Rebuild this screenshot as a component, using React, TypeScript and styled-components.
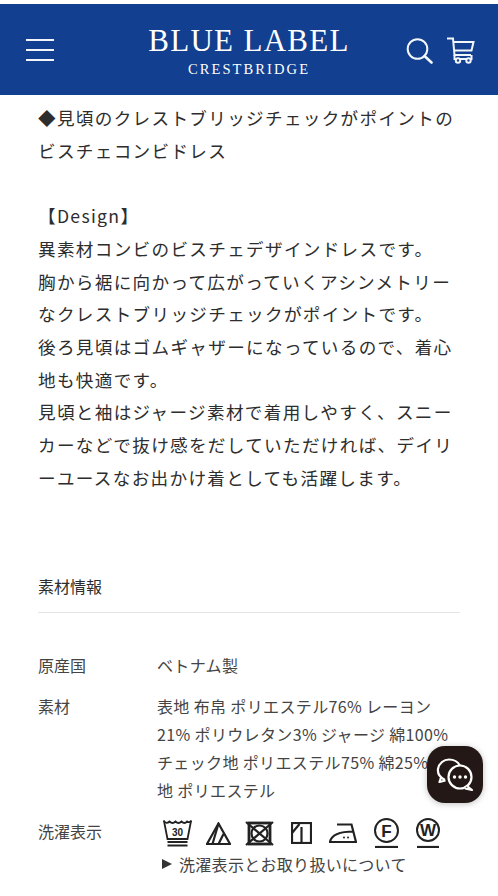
import * as React from 'react';
import styled, {createGlobalStyle} from 'styled-components';

const GlobalStyle = createGlobalStyle`
  html, body {
    margin: 0;
    padding: 0;
    height: 100%;
    overflow: hidden;
    background: #fff;
  }
  body {
    font-family: "Noto Sans CJK JP", "Noto Sans", sans-serif;
    color: #333;
  }
`;

const Page = styled.div`
  width: 498px;
  height: 896px;
  padding-top: 4px;
  box-sizing: border-box;
  overflow: hidden;
`;

const Header = styled.header`
  height: 91px;
  background: #123f8f;
  display: grid;
  grid-template-columns: 1fr auto 1fr;
  align-items: center;
  padding: 0 23px;
  color: #fff;
`;

const MenuButton = styled.div`
  width: 28px;
  margin-left: 3px;
  display: flex;
  flex-direction: column;
  gap: 8px;

  & span {
    display: block;
    height: 2px;
    background: #f2f5fa;
  }
`;

const Logo = styled.div`
  display: flex;
  flex-direction: column;
  align-items: center;
  font-family: "Liberation Serif", serif;
  padding-top: 3px;
`;

const LogoMain = styled.div`
  font-size: 31px;
  line-height: 32px;
  letter-spacing: 1.3px;
  white-space: nowrap;
`;

const LogoSub = styled.div`
  font-size: 14.5px;
  line-height: 16px;
  letter-spacing: 2.1px;
  margin-top: 4px;
`;

const HeaderIcons = styled.div`
  display: flex;
  justify-content: flex-end;
  align-items: center;
  gap: 13px;
  padding-top: 2px;
`;

const Description = styled.div`
  padding: 7px 38px 0;
  font-size: 17.6px;
  line-height: 32.7px;
  letter-spacing: 1.32px;
  color: #2d2d2d;
  white-space: nowrap;
`;

const Blank = styled.div`
  height: 32.7px;
`;

const SectionTitle = styled.h2`
  margin: 81px 38px 0;
  padding-bottom: 15px;
  font-size: 16px;
  line-height: 22px;
  font-weight: 400;
  color: #2d2d2d;
  border-bottom: 1px solid #e4e4e4;
`;

const SpecList = styled.div`
  margin: 38px 38px 0;
  display: flex;
  flex-direction: column;
  gap: 13px;
`;

const SpecRow = styled.div`
  display: grid;
  grid-template-columns: 119px 1fr;
  font-size: 16px;
  line-height: 28px;
  color: #444;
`;

const SpecValue = styled.div`
  white-space: nowrap;
  letter-spacing: 0.36px;
`;

const CareIcons = styled.div<{$gap: number}>`
  display: flex;
  align-items: center;
  gap: ${(p) => p.$gap}px;
`;

const CareRow = styled(CareIcons)`
  margin-left: 6px;
  height: 32px;
`;

const CareLink = styled.div`
  display: flex;
  align-items: center;
  gap: 7px;
  margin: 1px 0 0 5px;
  white-space: nowrap;
  letter-spacing: 0.3px;

  &::before {
    content: "";
    border-left: 10px solid #333;
    border-top: 5px solid transparent;
    border-bottom: 5px solid transparent;
  }
`;

const ChatButton = styled.div`
  position: fixed;
  left: 427px;
  top: 746px;
  width: 56px;
  height: 57px;
  border-radius: 18px;
  background: #231815;
  display: flex;
  align-items: center;
  justify-content: center;
  box-shadow: 0 1px 6px rgba(0, 0, 0, 0.25);
`;

const Search = () => (
  <svg width="27" height="26" viewBox="0 0 27 26" fill="none" stroke="#f2f5fa" strokeWidth="2" strokeLinecap="round">
    <circle cx="11.5" cy="11" r="9.8" />
    <path d="M18.5 18 L25.5 24.5" strokeWidth="2.6" />
  </svg>
);

const Cart = () => (
  <svg width="29" height="27" viewBox="0 0 29 27" fill="none" stroke="#f2f5fa" strokeWidth="2">
    <path d="M1 1.5 H7 L8.5 18 H25" />
    <path d="M7.2 5 H27.5 L25.5 13.5 H8" />
    <path d="M8.5 18 V22 H25.5 V18" />
    <circle cx="12" cy="23.5" r="2.2" fill="#123f8f" />
    <circle cx="22.5" cy="23.5" r="2.2" fill="#123f8f" />
  </svg>
);

const Chat = () => (
  <svg width="38" height="38" viewBox="0 0 38 38" fill="none" stroke="#fff" strokeWidth="2.2" strokeLinejoin="round">
    <path d="M9 24 C3 21 1.5 17 2 13 C3 7 8 3.5 13 3.5 C18 3.5 22 6 24 9.5 M5 21.5 L3.5 26 L9.5 24.5" />
    <circle cx="24" cy="21" r="11.5" fill="#231815" />
    <path d="M31 30 L36 34 L29 32.5" fill="#231815" />
    <circle cx="18.5" cy="21" r="1.7" fill="#fff" stroke="none" />
    <circle cx="24" cy="21" r="1.7" fill="#fff" stroke="none" />
    <circle cx="29.5" cy="21" r="1.7" fill="#fff" stroke="none" />
  </svg>
);

const Wash = () => (
  <svg width="29" height="28" viewBox="0 0 29 28" fill="none" stroke="#222" strokeWidth="1.8">
    <path d="M0.5 1.5 C2.5 4.5 4.5 4.5 6.5 2.5 C8.5 4.5 10.5 4.5 12.5 2.5 C14.5 4.5 16.5 4.5 18.5 2.5 C20.5 4.5 22.5 4.5 24 2.5 C25 3.5 27.5 3.5 28.5 1.5" />
    <path d="M1 2 L4.5 20 H24.5 L28 2" />
    <path d="M4.5 23 H24.5 M4.5 26.5 H24.5" />
    <text x="14.5" y="16.5" fontSize="10" fontFamily="Liberation Sans" textAnchor="middle" fill="#222" stroke="none" fontWeight="700">30</text>
  </svg>
);

const Bleach = () => (
  <svg width="25" height="23" viewBox="0 0 25 23" fill="none" stroke="#222" strokeWidth="2.2">
    <path d="M12.5 1.5 L24 22 H1 Z" />
    <path d="M12.5 1.5 L6.5 22 M17.5 12 L12.5 22" />
  </svg>
);

const NoTumble = () => (
  <svg width="29" height="25" viewBox="0 0 29 25" fill="none" stroke="#222" strokeWidth="2.2">
    <rect x="4" y="2" width="21" height="21" strokeWidth="2.8" />
    <circle cx="14.5" cy="12.5" r="8" />
    <path d="M1 1 L28 24 M28 1 L1 24" />
  </svg>
);

const Dry = () => (
  <svg width="21" height="22" viewBox="0 0 21 22" fill="none" stroke="#222" strokeWidth="2.2">
    <rect x="1" y="1" width="19" height="20" />
    <path d="M1 11 L8.5 2 M10.5 5 V21" />
  </svg>
);

const Iron = () => (
  <svg width="28" height="20" viewBox="0 0 28 20" fill="none" stroke="#222" strokeWidth="2.2">
    <path d="M8 1.5 H22.5 L27 19 H1 C2 13 7 8.5 25 8.5" />
    <circle cx="15" cy="14.5" r="1" fill="#222" stroke="none" />
    <circle cx="19" cy="14.5" r="1" fill="#222" stroke="none" />
  </svg>
);

const Circled = ({letter, size}: {letter: string; size: number}) => (
  <svg width={size} height="30" viewBox={`0 0 ${size} 30`} fill="none" stroke="#222" strokeWidth="2">
    <circle cx={size / 2} cy={size / 2} r={size / 2 - 1} />
    <path d={`M1 29 H${size - 1}`} strokeWidth="2.2" />
    <text x={size / 2} y={size / 2 + 6} fontSize="17" fontFamily="Liberation Sans" textAnchor="middle" fill="#222" stroke="none" fontWeight="700">{letter}</text>
  </svg>
);

export default function App() {
  return (
    <Page>
      <GlobalStyle />
      <Header>
        <MenuButton><span /><span /><span /></MenuButton>
        <Logo>
          <LogoMain>BLUE LABEL</LogoMain>
          <LogoSub>CRESTBRIDGE</LogoSub>
        </Logo>
        <HeaderIcons><Search /><Cart /></HeaderIcons>
      </Header>

      <Description>
        ◆見頃のクレストブリッジチェックがポイントの<br />
        ビスチェコンビドレス<br />
        <Blank />
        【Design】<br />
        異素材コンビのビスチェデザインドレスです。<br />
        胸から裾に向かって広がっていくアシンメトリー<br />
        なクレストブリッジチェックがポイントです。<br />
        後ろ見頃はゴムギャザーになっているので、着心<br />
        地も快適です。<br />
        見頃と袖はジャージ素材で着用しやすく、スニー<br />
        カーなどで抜け感をだしていただければ、デイリ<br />
        ーユースなお出かけ着としても活躍します。
      </Description>

      <SectionTitle>素材情報</SectionTitle>

      <SpecList>
        <SpecRow>
          <div>原産国</div>
          <SpecValue>ベトナム製</SpecValue>
        </SpecRow>
        <SpecRow>
          <div>素材</div>
          <SpecValue>
            表地 布帛 ポリエステル76% レーヨン<br />
            21% ポリウレタン3% ジャージ 綿100%<br />
            チェック地 ポリエステル75% 綿25% 裏<br />
            地 ポリエステル
          </SpecValue>
        </SpecRow>
        <SpecRow>
          <div>洗濯表示</div>
          <div>
            <CareRow $gap={17}>
              <CareIcons $gap={14}>
                <Wash />
                <Bleach />
                <NoTumble />
              </CareIcons>
              <Dry />
              <Iron />
              <Circled letter="F" size={25} />
              <Circled letter="W" size={24} />
            </CareRow>
            <CareLink>洗濯表示とお取り扱いについて</CareLink>
          </div>
        </SpecRow>
      </SpecList>

      <ChatButton><Chat /></ChatButton>
    </Page>
  );
}
